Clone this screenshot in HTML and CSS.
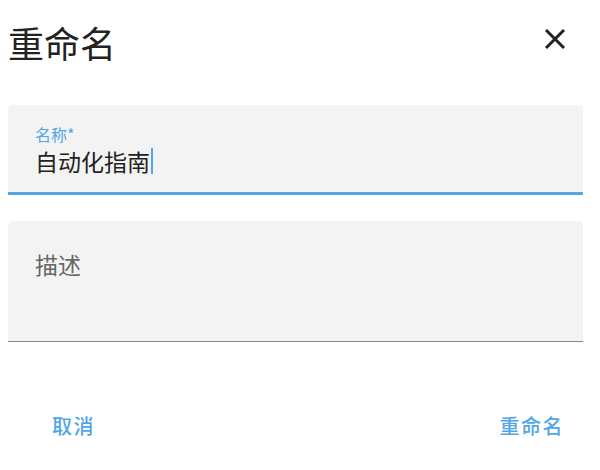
FILE: index.html
```html
<!DOCTYPE html>
<html lang="zh">
<head>
<meta charset="utf-8">
<link rel="stylesheet" href="styles.css">
</head>
<body>
<div class="dialog">
  <header class="header">
    <h1 class="title">重命名</h1>
    <button class="close" aria-label="关闭">
      <svg width="22" height="22" viewBox="0 0 22 22"><path d="M2 2L20 20M20 2L2 20" stroke="#222" stroke-width="3" fill="none"/></svg>
    </button>
  </header>
  <div class="fields">
    <div class="field focused">
      <span class="label">名称*</span>
      <span class="value">自动化指南<span class="caret"></span></span>
    </div>
    <div class="field area">
      <span class="placeholder">描述</span>
    </div>
  </div>
  <div class="actions">
    <button class="btn">取消</button>
    <button class="btn">重命名</button>
  </div>
</div>
</body>
</html>
```
FILE: styles.css
```css
* { box-sizing: border-box; }
html, body { margin: 0; padding: 0; background: #fff; }
body { font-family: "Noto Sans CJK SC", "Noto Sans", sans-serif; width: 600px; height: 470px; overflow: hidden; }
.dialog { display: flex; flex-direction: column; }
.header { display: flex; justify-content: space-between; align-items: center; height: 84px; padding: 0 34px 0 8px; }
.title { margin: 0; font-size: 36px; font-weight: 400; color: #222; line-height: 1; }
.close { border: 0; background: none; padding: 0; width: 22px; height: 22px; display: flex; margin-top: -6px; }
.fields { display: flex; flex-direction: column; gap: 26px; margin: 21px 17px 0 8px; }
.field { background: #f3f3f3; border-radius: 5px 5px 0 0; padding: 0 27px; display: flex; flex-direction: column; }
.field.focused { height: 90px; border-bottom: 3px solid #52a6e5; padding-top: 18px; }
.label { font-size: 16px; color: #52a6e5; line-height: 22px; }
.value { font-size: 23px; color: #222; line-height: 32px; display: flex; align-items: center; }
.caret { display: inline-block; width: 1.5px; height: 26px; background: #52a6e5; margin-left: 1px; }
.field.area { height: 121px; border-bottom: 1px solid #888; padding-top: 27px; }
.placeholder { font-size: 23px; color: #666; line-height: 32px; }
.actions { display: flex; justify-content: space-between; margin-top: 70px; padding: 0 36px 0 52px; }
.btn { border: 0; background: none; padding: 0; font-family: inherit; font-size: 20px; font-weight: 500; color: #52a6e5; letter-spacing: 1.5px; line-height: 28px; }
```
